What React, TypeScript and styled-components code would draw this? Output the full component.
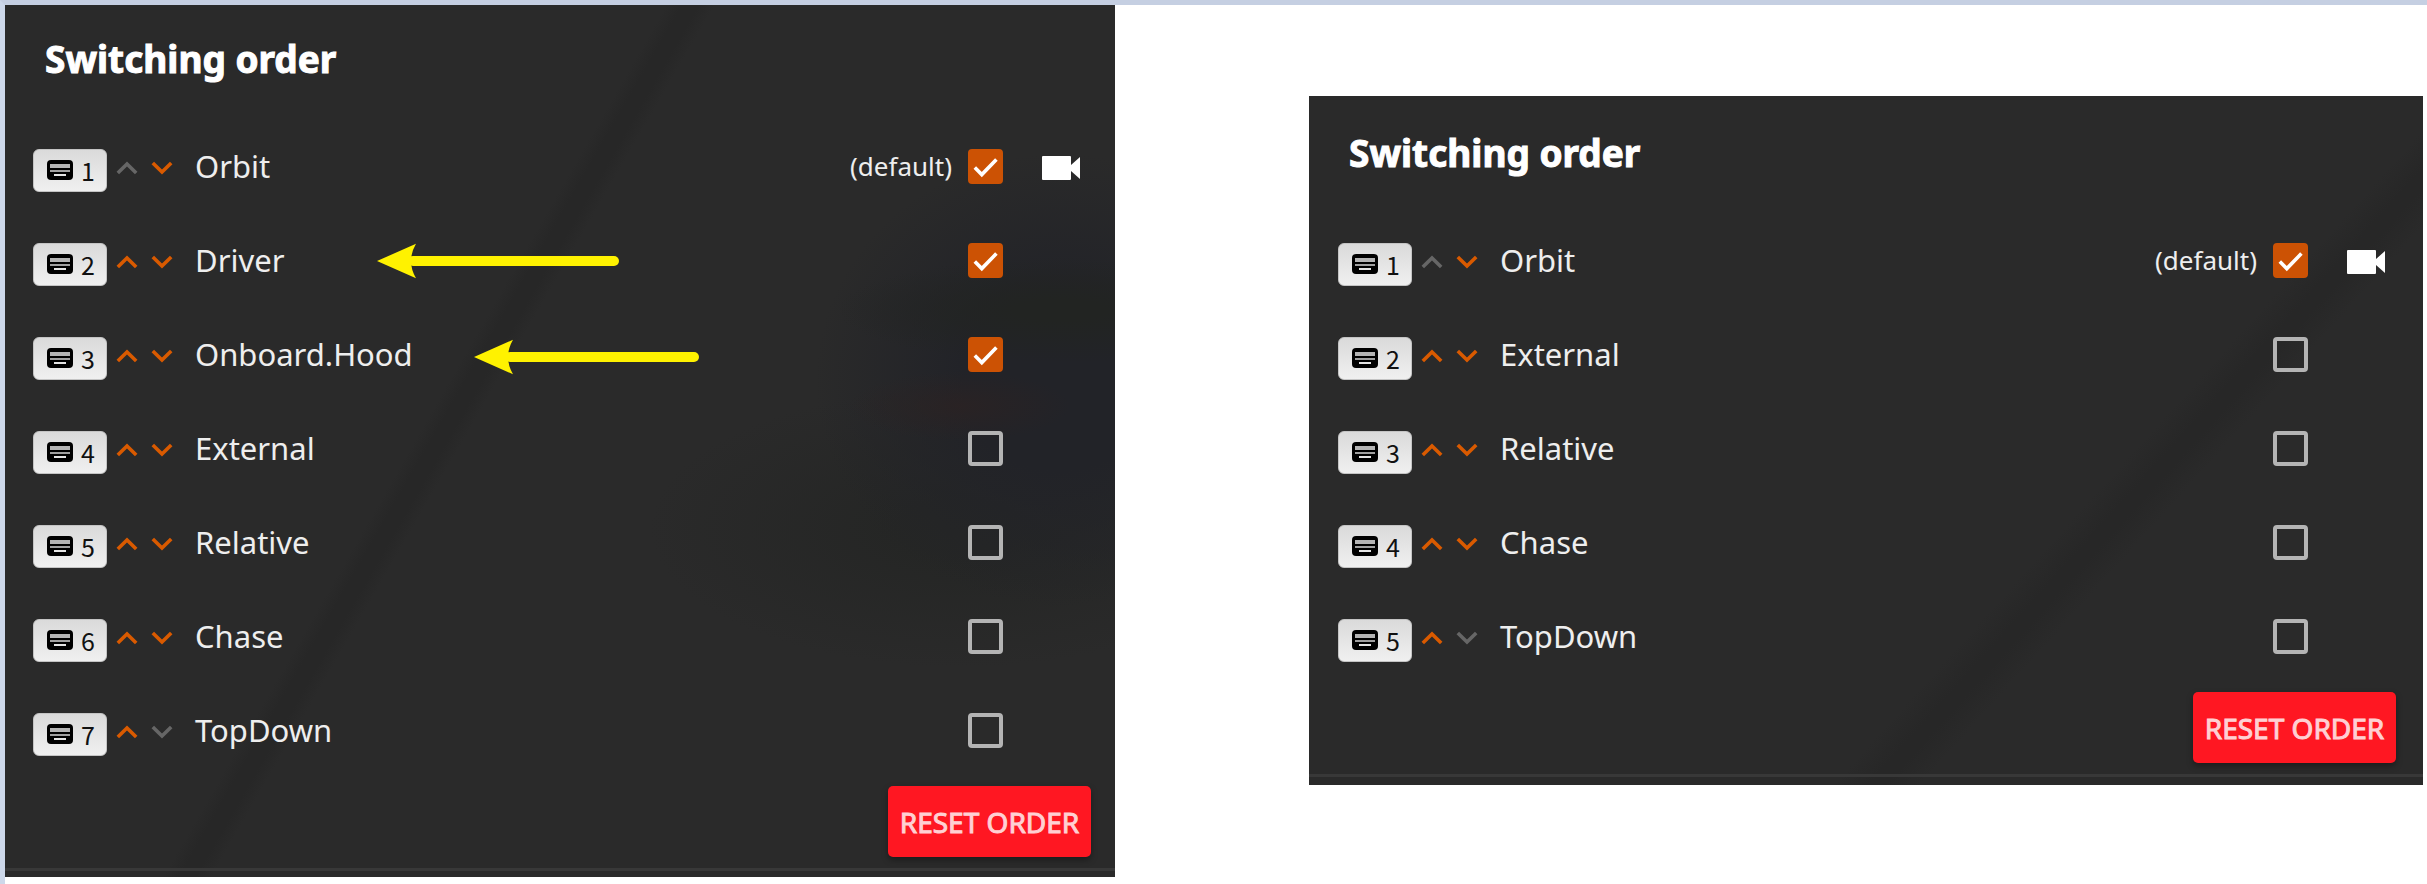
import React from 'react';
import styled, { createGlobalStyle } from 'styled-components';

const GlobalStyle = createGlobalStyle`
  *, *::before, *::after { box-sizing: border-box; }
  body {
    margin: 0;
    background: #ffffff;
    font-family: "Noto Sans", "Open Sans", sans-serif;
    color: #eeeeee;
  }
`;

const Page = styled.main`
  display: grid;
  grid-template-columns: 555fr 557fr;
  column-gap: 194px;
  align-items: start;
  min-height: 100vh;
  padding-right: 4px;
  border-top: 5px solid #c5cfe2;
  border-left: 5px solid #cdd8ea;
`;

const Panel = styled.section<{ $inset?: boolean }>`
  --side: ${(p) => (p.$inset ? 27 : 24)}px;
  --start: ${(p) => (p.$inset ? 29 : 28)}px;
  display: flex;
  flex-direction: column;
  margin-top: ${(p) => (p.$inset ? 91 : 0)}px;
  padding: ${(p) => (p.$inset ? '3px 0 8px' : '0 0 6px')};
  background-color: #2a2a2a;
  background-image: ${(p) =>
    p.$inset
      ? `linear-gradient(132deg, transparent 66%, #272727 68%, #272727 69%, transparent 71%)`
      : `radial-gradient(ellipse 10% 4% at 86% 46%, rgba(46, 34, 33, 0.6), transparent),
         radial-gradient(ellipse 20% 6% at 95% 35%, #222422 20%, transparent),
         radial-gradient(ellipse 22% 26% at 95% 43%, #222328 40%, transparent),
         radial-gradient(ellipse 28% 16% at 86% 60%, #252625 20%, transparent),
         linear-gradient(120deg, transparent 41%, #272727 42%, #272727 43%, transparent 44%)`};
`;

const Title = styled.h2`
  margin: 0;
  padding: 30px 40px 36px;
  font-size: 37px;
  line-height: 48px;
  font-weight: 700;
  color: #ffffff;
  -webkit-text-stroke: 1px #ffffff;
`;

const List = styled.ul`
  margin: 0;
  padding: 0 0 0 var(--start);
  list-style: none;
`;

const Row = styled.li`
  position: relative;
  display: flex;
  align-items: center;
  height: 94px;
`;

const Binding = styled.button`
  display: flex;
  align-items: center;
  justify-content: center;
  gap: 8px;
  width: 74px;
  height: 43px;
  margin: 8px 2px 0 0;
  padding: 0 0 0 2px;
  border: 1px solid #c4c4c4;
  border-radius: 6px;
  background: linear-gradient(#dadada, #f0f0f0);
  color: #111111;
  font: 400 25px/32px "Noto Sans CJK SC", "Noto Sans", sans-serif;
`;

const Move = styled.button`
  display: grid;
  place-items: center;
  width: 35px;
  height: 40px;
  margin-top: 4px;
  padding: 0;
  border: 0;
  background: none;
  color: #d95a00;
  &:disabled { color: #666666; }
`;

const Name = styled.label`
  flex: 1;
  margin-left: 16px;
  font-size: 31px;
  line-height: 44px;
`;

const DefaultNote = styled.span`
  margin-right: 16px;
  font-size: 26px;
  line-height: 40px;
`;

const Tick = styled.span`
  display: grid;
  width: 35px;
  height: 35px;
  & > * { grid-area: 1 / 1; }
  & > svg { pointer-events: none; }
`;

const TickInput = styled.input`
  appearance: none;
  width: 35px;
  height: 35px;
  margin: 0;
  border: 4px solid #b4b4b4;
  border-radius: 4px;
  &:checked { border-color: #cc5204; background: #cc5204; }
`;

const CameraSlot = styled.span`
  display: flex;
  box-sizing: content-box;
  width: 49px;
  padding: 4px var(--side) 0 39px;
`;

const Pointer = styled.svg<{ $left: number; $top: number }>`
  position: absolute;
  left: ${(p) => p.$left}px;
  top: ${(p) => p.$top}px;
`;

const Footer = styled.footer`
  display: flex;
  justify-content: flex-end;
  margin-top: 9px;
  padding: 0 var(--side) 11px 0;
  border-bottom: 3px solid #383838;
`;

const ResetButton = styled.button`
  height: 71px;
  width: 203px;
  padding: 0;
  border: 0;
  border-radius: 5px;
  background: #ff1722;
  color: #ffd0d3;
  box-shadow: 0 3px 6px rgba(0, 0, 0, 0.35);
  font: 400 28px/36px "Noto Sans", sans-serif;
  -webkit-text-stroke: 1px #ffd0d3;
  white-space: nowrap;
`;

const KeyboardIcon = () => (
  <svg width="26" height="20" viewBox="0 0 26 20" aria-hidden="true">
    <rect width="26" height="20" rx="4" fill="#000" />
    <path d="M3 4h20v4H3z" fill="#b4b4b4" />
    <path d="M3 10h20v2H3z" fill="#a0a0a0" />
    <path d="M7 14h12v2H7z" fill="#e4e4e4" />
  </svg>
);

const Chevron = ({ down }: { down?: boolean }) => (
  <svg width="22" height="14" viewBox="0 0 22 14" fill="none" stroke="currentColor" strokeWidth="3.6" aria-hidden="true">
    <path d={down ? 'M1.8 2l9.2 9 9.2-9' : 'M1.8 12l9.2-9 9.2 9'} />
  </svg>
);

const CheckIcon = () => (
  <svg width="35" height="35" viewBox="0 0 35 35" fill="none" stroke="#fff" strokeWidth="3.6" aria-hidden="true">
    <path d="M6.8 18.6l7 7L28.4 10.6" />
  </svg>
);

const CameraIcon = () => (
  <svg width="38" height="24" viewBox="0 0 38 24" fill="#fff" aria-hidden="true">
    <path d="M1 0h27q1 0 1 1v8l9-8v22l-9-8v8q0 1-1 1H1q-1 0-1-1V1q0-1 1-1z" />
  </svg>
);

const Arrow = ({ left, top, length }: { left: number; top: number; length: number }) => (
  <Pointer $left={left} $top={top} width={length} height="36" viewBox={`0 0 ${length} 36`} aria-hidden="true">
    <path d={`M36 18H${length - 5}`} stroke="#fff200" strokeWidth="10" strokeLinecap="round" />
    <path d="M0 18L39 .8Q29 18 39 35.200z" fill="#fff200" />
  </Pointer>
);

type Camera = {
  name: string;
  enabled?: boolean;
  arrow?: { left: number; top: number; length: number };
};

const withOnboard: Camera[] = [
  { name: 'Orbit', enabled: true },
  { name: 'Driver', enabled: true, arrow: { left: 344, top: 30, length: 242 } },
  { name: 'Onboard.Hood', enabled: true, arrow: { left: 441, top: 32, length: 225 } },
  { name: 'External' },
  { name: 'Relative' },
  { name: 'Chase' },
  { name: 'TopDown' },
];

const withoutOnboard: Camera[] = [
  { name: 'Orbit', enabled: true },
  { name: 'External' },
  { name: 'Relative' },
  { name: 'Chase' },
  { name: 'TopDown' },
];

const OrderPanel = ({ id, cameras, inset }: { id: string; cameras: Camera[]; inset?: boolean }) => (
  <Panel $inset={inset} aria-labelledby={`${id}-title`}>
    <Title id={`${id}-title`}>Switching order</Title>
    <List>
      {cameras.map((camera, i) => (
        <Row key={camera.name}>
          <Binding type="button">
            <KeyboardIcon />
            {i + 1}
          </Binding>
          <Move type="button" aria-label={`Move ${camera.name} up`} disabled={i === 0}>
            <Chevron />
          </Move>
          <Move type="button" aria-label={`Move ${camera.name} down`} disabled={i === cameras.length - 1}>
            <Chevron down />
          </Move>
          <Name htmlFor={`${id}-${i}`}>{camera.name}</Name>
          {i === 0 && <DefaultNote>(default)</DefaultNote>}
          <Tick>
            <TickInput type="checkbox" id={`${id}-${i}`} defaultChecked={camera.enabled} />
            {camera.enabled && <CheckIcon />}
          </Tick>
          <CameraSlot>{i === 0 && <CameraIcon />}</CameraSlot>
          {camera.arrow && <Arrow {...camera.arrow} />}
        </Row>
      ))}
    </List>
    <Footer>
      <ResetButton type="button">RESET ORDER</ResetButton>
    </Footer>
  </Panel>
);

export default function App() {
  return (
    <>
      <GlobalStyle />
      <Page>
        <OrderPanel id="full" cameras={withOnboard} />
        <OrderPanel id="short" cameras={withoutOnboard} inset />
      </Page>
    </>
  );
}
